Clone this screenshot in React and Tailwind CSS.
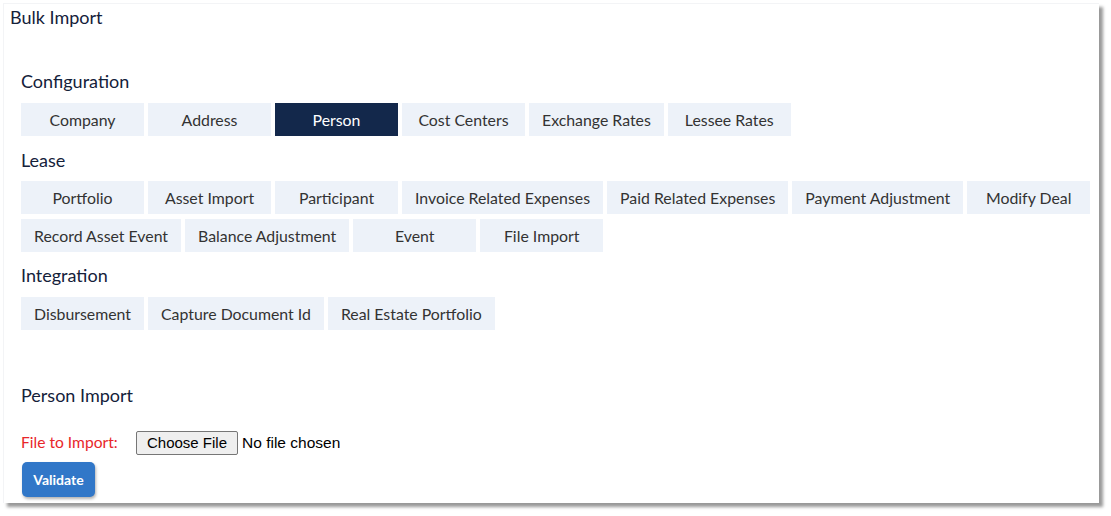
import React from 'react';

const sections = [
  { title: 'Configuration', mt: '', mb: 'mb-[10px]', items: ['Company', 'Address', 'Person', 'Cost Centers', 'Exchange Rates', 'Lessee Rates'] },
  {
    title: 'Lease',
    mt: 'mt-[12px]',
    mb: 'mb-[9px]',
    items: [
      'Portfolio', 'Asset Import', 'Participant', 'Invoice Related Expenses', 'Paid Related Expenses',
      'Payment Adjustment', 'Modify Deal', 'Record Asset Event', 'Balance Adjustment', 'Event', 'File Import',
    ],
  },
  { title: 'Integration', mt: 'mt-[11px]', mb: 'mb-[10px]', items: ['Disbursement', 'Capture Document Id', 'Real Estate Portfolio'] },
];

const active = 'Person';

export default function App() {
  return (
    <div className="w-[1111px] h-[516px] bg-white overflow-hidden" style={{ fontFamily: 'Lato, "Noto Sans", sans-serif' }}>
      <div className="ml-[3px] mt-[3px] w-[1096px] h-[500px] bg-white border-t border-l border-gray-100 shadow-[4px_4px_3px_rgba(0,0,0,0.4)]">
        <div className="pl-[6px] pt-[1px] text-[18px] leading-6 text-[#14213a]">Bulk Import</div>

        <div className="pl-[17px] pt-[40px]">
          {sections.map((s) => (
            <div key={s.title} className={s.mt}>
              <div className={`text-[18px] leading-6 text-[#14213a] ${s.mb}`}>{s.title}</div>
              <div className="flex flex-wrap gap-x-[4px] gap-y-[5px] w-[1075px]">
                {s.items.map((it) => (
                  <button
                    key={it}
                    className={`h-[33px] min-w-[123px] px-[13px] text-[15.85px] ${
                      it === active ? 'bg-[#13284b] text-white' : 'bg-[#edf2f9] text-[#333]'
                    }`}
                  >
                    {it}
                  </button>
                ))}
              </div>
            </div>
          ))}

          <div className="mt-[53px] text-[18px] leading-6 text-[#14213a]">Person Import</div>

          <div className="mt-[24px] flex items-center h-[24px]">
            <span className="w-[115px] text-[15.6px] text-[#e8262a]">File to Import:</span>
            <span
              className="h-[24px] px-[10px] flex items-center border border-[#767676] rounded-[2px] bg-[#efefef] text-[15px] text-black"
              style={{ fontFamily: '"Liberation Sans", Arial, sans-serif' }}
            >
              Choose File
            </span>
            <span
              className="ml-[4px] text-[15.5px] text-black"
              style={{ fontFamily: '"Liberation Sans", Arial, sans-serif' }}
            >
              No file chosen
            </span>
          </div>

          <button className="mt-[7px] ml-[1px] h-[35px] w-[73px] rounded-[5px] bg-[#3177c8] text-white text-[14px] font-bold shadow-[1px_2px_3px_rgba(0,0,0,0.3)]">
            Validate
          </button>
        </div>
      </div>
    </div>
  );
}
